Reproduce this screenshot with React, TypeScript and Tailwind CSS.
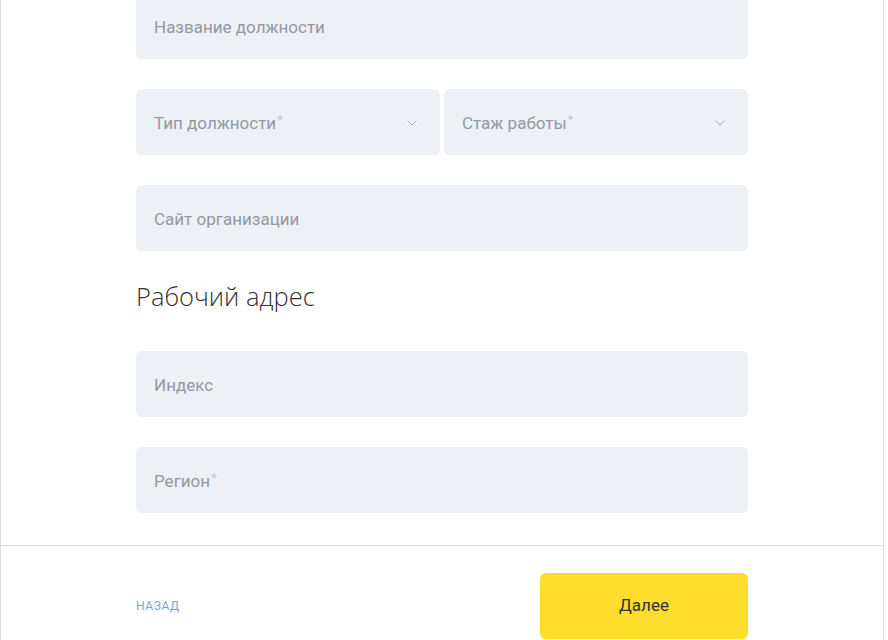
import { ChevronDown } from "lucide-react";

function Label({ text, required }: { text: string; required?: boolean }) {
  return (
    <span className="flex pt-[3px]">
      {text}
      {required && <span className="text-[#c3c8cf] text-[13px] mt-[-1px] ml-[1px]">*</span>}
    </span>
  );
}

function Field({ label, required }: { label: string; required?: boolean }) {
  return (
    <div className="h-[66px] rounded-md bg-[#edf0f5] flex items-center px-[18px] text-[17px] text-[#9299a2]">
      <Label text={label} required={required} />
    </div>
  );
}

function SelectField({ label }: { label: string }) {
  return (
    <div className="h-[66px] flex-1 rounded-md bg-[#edf0f5] flex items-center justify-between pl-[18px] pr-[20px] text-[17px] text-[#9299a2]">
      <Label text={label} required />
      <ChevronDown className="w-[16px] h-[16px] text-[#9aa0a8] mt-[2px]" strokeWidth={1.3} />
    </div>
  );
}

export default function App() {
  return (
    <div className="w-[888px] h-[640px] overflow-hidden bg-white" style={{ fontFamily: "Roboto, 'Liberation Sans', sans-serif" }}>
      <div className="w-[884px] h-full border-x border-[#dddddd] flex flex-col">
        <div className="px-[135px] -mt-[7px] flex flex-col gap-[30px] pb-[32px] border-b border-[#dddddd]">
          <Field label="Название должности" />
          <div className="flex gap-[4px]">
            <SelectField label="Тип должности" />
            <SelectField label="Стаж работы" />
          </div>
          <Field label="Сайт организации" />
          <h2 className="text-[25.5px] font-light text-[#333333] leading-none -mt-[4px] mb-[4px] h-[40px] flex items-center" style={{ fontFamily: "'Open Sans', sans-serif" }}>
            Рабочий адрес
          </h2>
          <Field label="Индекс" />
          <Field label="Регион" required />
        </div>
        <div className="px-[135px] pt-[27px] flex items-center justify-between">
          <button className="text-[12px] uppercase text-[#7aa3d6] tracking-[0.6px]">Назад</button>
          <button className="w-[208px] h-[66px] rounded-md bg-[#ffdd2d] text-[17px] text-[#333333]">Далее</button>
        </div>
      </div>
    </div>
  );
}
